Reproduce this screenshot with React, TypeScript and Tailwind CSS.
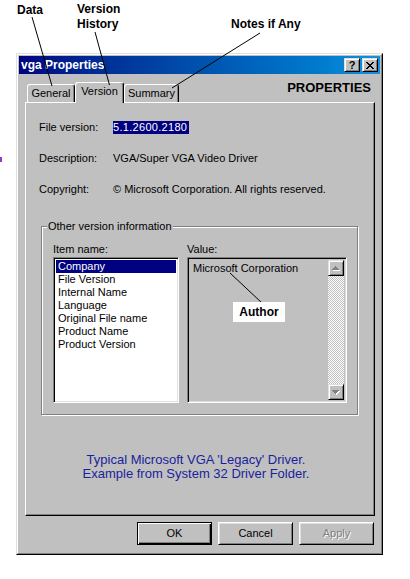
import React from "react";

const raised =
  "border border-[#dfdfdf] border-r-black border-b-black shadow-[inset_1px_1px_0_#fff,inset_-1px_-1px_0_#808080]";
const sunken =
  "border border-[#808080] border-r-white border-b-white shadow-[inset_1px_1px_0_#000,inset_-1px_-1px_0_#dfdfdf]";

const items = [
  "Company",
  "File Version",
  "Internal Name",
  "Language",
  "Original File name",
  "Product Name",
  "Product Version",
];

const ArrowUp = () => (
  <svg width="8" height="5" viewBox="0 0 8 5">
    <path d="M4 1h1v1h-1z M3 2h3v1h-3z M2 3h5v1h-5z M1 4h7v1h-7z" fill="#fff" />
    <path d="M3 0h1v1h-1z M2 1h3v1h-3z M1 2h5v1h-5z M0 3h7v1h-7z" fill="#808080" />
  </svg>
);

const ArrowDown = () => (
  <svg width="8" height="5" viewBox="0 0 8 5">
    <path d="M1 1h7v1h-7z M2 2h5v1h-5z M3 3h3v1h-3z M4 4h1v1h-1z" fill="#fff" />
    <path d="M0 0h7v1h-7z M1 1h5v1h-5z M2 2h3v1h-3z M3 3h1v1h-1z" fill="#808080" />
  </svg>
);

const CloseGlyph = () => (
  <svg width="8" height="7" viewBox="0 0 8 7">
    <path
      d="M0 0h2v1h-2z M6 0h2v1h-2z M1 1h2v1h-2z M5 1h2v1h-2z M2 2h4v1h-4z M3 3h2v1h-2z M2 4h4v1h-4z M1 5h2v1h-2z M5 5h2v1h-2z M0 6h2v1h-2z M6 6h2v1h-2z"
      fill="#000"
    />
  </svg>
);

const Tab: React.FC<{ label: string; width: string; active?: boolean }> = ({
  label,
  width,
  active,
}) => (
  <div
    className={`${width} ${
      active ? "h-[21px] -mb-px pb-[3px]" : "h-[18px]"
    } flex items-center justify-center bg-[#c0c0c0] border-t border-l border-r border-white border-r-black shadow-[inset_-1px_0_0_#808080] rounded-t-[3px]`}
  >
    {label}
  </div>
);

const InfoRow: React.FC<{ label: string; children: React.ReactNode }> = ({
  label,
  children,
}) => (
  <div className="flex h-[13px] leading-[13px]">
    <span className="w-[74px]">{label}</span>
    {children}
  </div>
);

export default function App() {
  return (
    <div className="relative w-[410px] h-[579px] overflow-hidden bg-white text-[11px] text-black font-['Liberation_Sans',Arial,sans-serif]">
      {/* callouts */}
      <div className="absolute left-[17px] top-[3px] text-[12px] leading-[15px] font-bold">Data</div>
      <div className="absolute left-[77px] top-[2px] text-[12px] leading-[15px] font-bold">
        Version
        <br />
        History
      </div>
      <div className="absolute left-[231px] top-[17px] text-[12px] leading-[15px] font-bold">Notes if Any</div>
      <div className="absolute left-0 top-[157px] w-[2px] h-[5px] bg-[#8a3cd0]" />

      {/* dialog window */}
      <div className="ml-[16px] mt-[53px] w-[367px] h-[502px] border border-[#dfdfdf] border-r-black border-b-black">
        <div className="h-full flex flex-col p-px bg-[#c0c0c0] border border-white border-r-[#808080] border-b-[#808080]">
          <div className="h-[18px] flex items-center pl-[2px] pr-[2px] bg-linear-to-r from-[#000080] to-[#1890dc]">
            <span className="text-white font-bold text-[12px] leading-none">vga Properties</span>
            <div className="ml-auto flex gap-[2px]">
              <div className={`w-[16px] h-[14px] bg-[#c0c0c0] ${raised} flex items-center justify-center font-bold text-[11px] leading-none`}>
                ?
              </div>
              <div className={`w-[16px] h-[14px] bg-[#c0c0c0] ${raised} flex items-center justify-center`}>
                <CloseGlyph />
              </div>
            </div>
          </div>

          <div className="flex-1 flex flex-col pl-[6px] pr-[5px] pt-[8px]">
            <div className="relative z-10 flex items-end h-[20px] pl-[2px]">
              <Tab label="General" width="w-[48px]" />
              <Tab label="Version" width="w-[49px]" active />
              <Tab label="Summary" width="w-[55px]" />
              <span className="ml-auto mr-[4px] self-start -mt-[2px] text-[13px] leading-[15px] font-bold">PROPERTIES</span>
            </div>

            <div className="h-[414px] flex flex-col pl-[13px] pt-[18px] bg-[#c0c0c0] border border-white border-r-black border-b-black shadow-[inset_-1px_-1px_0_#808080]">
              <div className="flex flex-col gap-[18px]">
                <InfoRow label="File version:">
                  <span className="bg-[#000080] text-white pr-[2px] tracking-[0.3px]">5.1.2600.2180</span>
                </InfoRow>
                <InfoRow label="Description:">
                  <span>VGA/Super VGA Video Driver</span>
                </InfoRow>
                <InfoRow label="Copyright:">
                  <span>© Microsoft Corporation. All rights reserved.</span>
                </InfoRow>
              </div>

              <div className="relative mt-[30px] ml-[2px] w-[317px] h-[189px] pl-[11px] pt-[16px] border border-[#808080] shadow-[1px_1px_0_#fff,inset_1px_1px_0_#fff]">
                <span className="absolute -top-[7px] left-[5px] px-px bg-[#c0c0c0] leading-[13px]">
                  Other version information
                </span>
                <div className="flex gap-[8px]">
                  <div className="flex flex-col">
                    <span className="h-[13px] leading-[13px]">Item name:</span>
                    <div className={`mt-px w-[126px] h-[146px] bg-white p-[2px] ${sunken}`}>
                      {items.map((item, i) => (
                        <div
                          key={item}
                          className={`h-[13px] leading-[13px] pl-[2px] ${
                            i === 0 ? "bg-[#000080] text-white" : ""
                          }`}
                        >
                          {item}
                        </div>
                      ))}
                    </div>
                  </div>
                  <div className="flex flex-col">
                    <span className="h-[13px] leading-[13px]">Value:</span>
                    <div className={`mt-px w-[160px] h-[146px] flex bg-[#c0c0c0] p-[2px] ${sunken}`}>
                      <div className="flex-1 pl-[3px] pt-[2px] leading-[13px]">Microsoft Corporation</div>
                      <div className="w-[16px] flex flex-col">
                        <div className={`h-[16px] bg-[#c0c0c0] ${raised} flex items-center justify-center`}>
                          <ArrowUp />
                        </div>
                        <div className="flex-1 bg-[image:repeating-conic-gradient(#fff_0%_25%,#c0c0c0_0%_50%)] bg-[length:2px_2px]" />
                        <div className={`h-[16px] bg-[#c0c0c0] ${raised} flex items-center justify-center`}>
                          <ArrowDown />
                        </div>
                      </div>
                    </div>
                  </div>
                </div>
              </div>

              <div className="mt-[38px] w-[314px] text-center text-[13px] leading-[14px] text-[#1a1f9c]">
                Typical Microsoft VGA 'Legacy' Driver.
                <br />
                Example from System 32 Driver Folder.
              </div>
            </div>

            <div className="flex justify-end gap-[6px] mt-[6px] pr-px">
              <button className="w-[75px] h-[23px] bg-[#c0c0c0] border border-black shadow-[inset_1px_1px_0_#fff,inset_-1px_-1px_0_#000,inset_-2px_-2px_0_#808080]">
                OK
              </button>
              <button className="w-[75px] h-[23px] bg-[#c0c0c0] border border-white border-r-black border-b-black shadow-[inset_1px_1px_0_#dfdfdf,inset_-1px_-1px_0_#808080]">
                Cancel
              </button>
              <button className="w-[75px] h-[23px] bg-[#c0c0c0] text-[#808080] [text-shadow:1px_1px_0_#fff] border border-white border-r-black border-b-black shadow-[inset_1px_1px_0_#dfdfdf,inset_-1px_-1px_0_#808080]">
                Apply
              </button>
            </div>
          </div>
        </div>
      </div>

      {/* callout lines */}
      <svg
        className="absolute inset-0 z-20 pointer-events-none"
        width="410"
        height="579"
        viewBox="0 0 410 579"
      >
        <g stroke="#000" strokeWidth="1" fill="none">
          <line x1="32" y1="17" x2="52" y2="86" />
          <line x1="95" y1="32" x2="109.5" y2="85" />
          <line x1="260" y1="33" x2="172" y2="88" />
          <line x1="230" y1="273" x2="262" y2="303" />
        </g>
      </svg>
      <div className="absolute z-30 left-[233px] top-[302px] w-[52px] h-[20px] flex items-center justify-center bg-white text-[12px] font-bold">
        Author
      </div>
    </div>
  );
}
